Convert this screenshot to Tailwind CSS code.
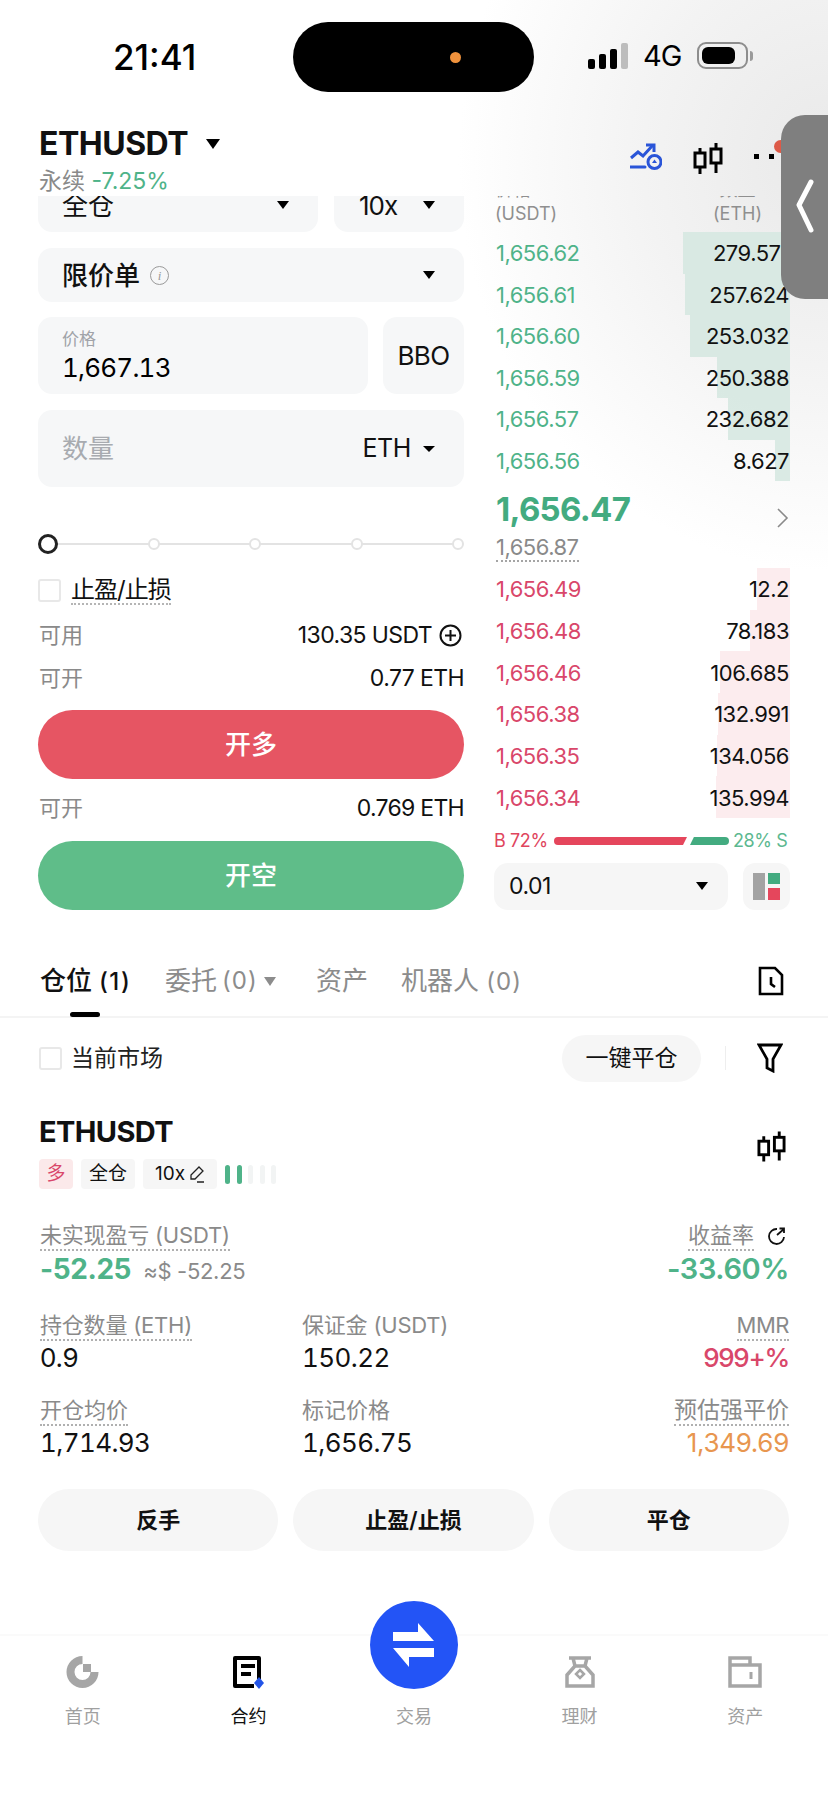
<!DOCTYPE html>
<html lang="zh-CN">
<head>
  <meta charset="UTF-8" />
  <meta name="viewport" content="width=device-width, initial-scale=1.0"/>
  <title>ETHUSDT</title>
  <script src="https://cdn.jsdelivr.net/npm/@tailwindcss/browser@4"></script>
</head>
<body class="bg-white">
<div class="relative w-[828px] h-[1795px] overflow-hidden bg-white text-[#111] [font-family:Inter,'Noto_Sans_CJK_SC',sans-serif]">
  <!-- grey wash behind the top right of the page -->
  <div class="absolute left-0 top-0 w-full h-[700px] bg-[radial-gradient(ellipse_370px_410px_at_100%_23%,#e9e9e9_0%,#f3f3f3_50%,#ffffff_100%)]"></div>

  <!-- status bar -->
  <div class="relative h-[98px] flex">
    <div class="w-[293px] pt-[37px] pl-[113px] text-[35px] leading-[40px] font-medium text-black">21:41</div>
    <div class="mt-[22px] w-[241px] h-[70px] rounded-[35px] bg-black flex items-center pl-[157px]">
      <div class="w-[11px] h-[11px] rounded-full bg-[#f0923c]"></div>
    </div>
    <div class="ml-[54px] mt-[43px] h-[26px] flex items-end">
      <div class="flex items-end gap-[4px]">
        <div class="w-[7px] h-[10px] rounded-[2px] bg-black"></div>
        <div class="w-[7px] h-[15px] rounded-[2px] bg-black"></div>
        <div class="w-[7px] h-[20px] rounded-[2px] bg-black"></div>
        <div class="w-[7px] h-[26px] rounded-[2px] bg-[#bdbdbd]"></div>
      </div>
      <div class="ml-[15px] text-[29px] leading-[26px] tracking-[-1px] text-black">4G</div>
      <div class="ml-[16px] w-[51px] h-[27px] rounded-[9px] border-2 border-[#8d8d8d] p-[3px]">
        <div class="w-[33px] h-full rounded-[6px] bg-black"></div>
      </div>
      <div class="ml-[2px] mb-[8px] w-[3px] h-[10px] rounded-r bg-[#9a9a9a]"></div>
    </div>
  </div>

  <!-- market header -->
  <div class="relative h-[98px] flex justify-between">
    <div class="pl-[39px] pt-[29px]">
      <div class="flex items-center h-[34px]">
        <span class="text-[32px] leading-[34px] font-bold tracking-[-0.5px]">ETHUSDT</span>
        <span class="ml-[18px] w-0 h-0 border-x-[7px] border-x-transparent border-t-[10px] border-t-black"></span>
      </div>
      <div class="mt-[8px] text-[23px] leading-[24px] text-[#8a8a8a]">永续 <span class="text-[#4fb389]">-7.25%</span></div>
    </div>
    <div class="flex pr-[54px] pt-[47px] gap-[31px] items-start">
      <svg width="32" height="28" viewBox="0 0 32 28" fill="none" stroke="#2a55d8" stroke-width="3" class="-mt-[2px]"><path d="M1 15l7-6 5 4 10-11"/><path d="M16 2h8v7"/><path d="M0 24h15" stroke-linecap="round"/><circle cx="24.500" cy="19" r="6.500"/><path d="M24.500 16.500l2.500 3.500h-5z" fill="#2a55d8" stroke="none"/></svg>
      <svg width="30" height="32" viewBox="0 0 30 32" fill="none" stroke="#000" stroke-width="3" class="-mt-[2px]"><rect x="2" y="10" width="10" height="14"/><path d="M7 5v5M7 24v7"/><rect x="18" y="6" width="10" height="14"/><path d="M23 0v6M23 20v10"/></svg>
      <div class="flex gap-[10px] mt-[9px]">
        <div class="w-[5px] h-[5px] bg-black"></div>
        <div class="w-[5px] h-[5px] bg-black"></div>
      </div>
    </div>
    <div class="absolute left-[774px] top-[42px] w-[13px] h-[13px] rounded-full bg-[#dd5a48]"></div>
  </div>

  <!-- order form and book -->
  <div class="relative h-[733px] overflow-hidden flex pl-[38px]">
    <div class="w-[426px] -mt-[18px]">
      <div class="flex gap-[16px]">
        <div class="w-[280px] h-[54px] rounded-[14px] bg-[#f6f7f8] flex items-center justify-between pl-[24px] pr-[29px]">
          <span class="text-[26px]">全仓</span>
          <span class="w-0 h-0 border-x-[6px] border-x-transparent border-t-[8px] border-t-black"></span>
        </div>
        <div class="w-[130px] h-[54px] rounded-[14px] bg-[#f6f7f8] flex items-center justify-between pl-[25px] pr-[29px]">
          <span class="text-[26px] tracking-[-1px]">10x</span>
          <span class="w-0 h-0 border-x-[6px] border-x-transparent border-t-[8px] border-t-black"></span>
        </div>
      </div>
      <div class="mt-[16px] h-[54px] rounded-[14px] bg-[#f6f7f8] flex items-center justify-between pl-[24px] pr-[29px]">
        <div class="flex items-center gap-[10px]">
          <span class="text-[26px] font-medium">限价单</span>
          <span class="w-[19px] h-[19px] rounded-full border border-[#9a9a9a] text-[#9a9a9a] text-[13px] leading-[17px] text-center italic font-['Liberation_Serif',serif]">i</span>
        </div>
        <span class="w-0 h-0 border-x-[6px] border-x-transparent border-t-[8px] border-t-black"></span>
      </div>
      <div class="mt-[15px] flex gap-[15px]">
        <div class="w-[330px] h-[77px] rounded-[14px] bg-[#f6f7f8] pl-[24px] pt-[11px]">
          <div class="text-[17px] leading-[22px] text-[#a0a3a8]">价格</div>
          <div class="mt-[2px] text-[26px] leading-[32px] tabular-nums tracking-[-0.8px] text-black">1,667.13</div>
        </div>
        <div class="w-[81px] h-[77px] rounded-[14px] bg-[#f6f7f8] flex items-center justify-center text-[26px] tracking-[-0.6px]">BBO</div>
      </div>
      <div class="mt-[16px] h-[77px] rounded-[14px] bg-[#f6f7f8] flex items-center justify-between pl-[24px] pr-[29px]">
        <span class="text-[26px] text-[#a8abb0]">数量</span>
        <div class="flex items-center gap-[12px]">
          <span class="text-[25px] tracking-[-0.4px]">ETH</span>
          <span class="w-0 h-0 border-x-[6px] border-x-transparent border-t-[6px] border-t-black"></span>
        </div>
      </div>
      <!-- leverage slider -->
      <div class="relative mt-[47px] h-[20px] flex items-center justify-between">
        <div class="absolute left-[10px] right-[6px] top-[9px] h-[2px] bg-[#e3e3e3]"></div>
        <div class="relative w-[20px] h-[20px] rounded-full border-[3px] border-[#222] bg-white"></div>
        <div class="relative w-[12px] h-[12px] rounded-full border-2 border-[#e3e3e3] bg-white"></div>
        <div class="relative w-[12px] h-[12px] rounded-full border-2 border-[#e3e3e3] bg-white"></div>
        <div class="relative w-[12px] h-[12px] rounded-full border-2 border-[#e3e3e3] bg-white"></div>
        <div class="relative w-[12px] h-[12px] rounded-full border-2 border-[#e3e3e3] bg-white"></div>
      </div>
      <div class="mt-[23px] flex items-center gap-[10px] h-[27px]">
        <div class="w-[23px] h-[23px] rounded-[3px] border-2 border-[#e8e8e8]"></div>
        <span class="text-[24px] leading-[27px] border-b-2 border-dotted border-[#b5b5b5] tracking-[-1px]">止盈/止损</span>
      </div>
      <div class="mt-[17px] h-[28px] flex items-center justify-between text-[22px]">
        <span class="text-[#8a8a8a] pl-[1px]">可用</span>
        <div class="flex items-center gap-[7px] pr-[2px]">
          <span class="text-[23px] tracking-[-0.6px]">130.35 USDT</span>
          <svg width="23" height="23" viewBox="0 0 23 23" fill="none" stroke="#111" stroke-width="2"><circle cx="11.500" cy="11.500" r="10"/><path d="M11.500 6v11M6 11.500h11"/></svg>
        </div>
      </div>
      <div class="mt-[15px] h-[28px] flex items-center justify-between text-[22px]">
        <span class="text-[#8a8a8a] pl-[1px]">可开</span>
        <span class="text-[23px] tracking-[-0.6px]">0.77 ETH</span>
      </div>
      <button class="mt-[18px] w-full h-[69px] rounded-full bg-[#e65563] text-white text-[26px] font-medium">开多</button>
      <div class="mt-[15px] h-[28px] flex items-center justify-between text-[22px]">
        <span class="text-[#8a8a8a] pl-[1px]">可开</span>
        <span class="text-[23px] tracking-[-0.7px]">0.769 ETH</span>
      </div>
      <button class="mt-[19px] w-full h-[69px] rounded-full bg-[#5fbd89] text-white text-[26px] font-medium">开空</button>
    </div>

    <div class="ml-[30px] w-[296px] -mt-[18px]">
      <div class="flex justify-between pl-[1px] pr-[28px] text-[18px] leading-[24px] text-[#8f8f8f]">
        <div>价格<br>(USDT)</div>
        <div class="text-center">数量<br>(ETH)</div>
      </div>
      <div class="mt-[6px] text-[22px] tracking-[-0.5px]">
        <div class="relative h-[41.500px] pt-[2px] flex items-center justify-between pl-[2px] pr-[1px]"><div class="absolute right-0 top-0 h-full w-[107px] bg-[#d6e8e1]/90"></div><span class="relative text-[#4fb389]">1,656.62</span><span class="relative">279.571</span></div>
        <div class="relative h-[41.500px] pt-[2px] flex items-center justify-between pl-[2px] pr-[1px]"><div class="absolute right-0 top-0 h-full w-[105px] bg-[#d6e8e1]/90"></div><span class="relative text-[#4fb389]">1,656.61</span><span class="relative">257.624</span></div>
        <div class="relative h-[41.500px] pt-[2px] flex items-center justify-between pl-[2px] pr-[1px]"><div class="absolute right-0 top-0 h-full w-[100px] bg-[#d6e8e1]/90"></div><span class="relative text-[#4fb389]">1,656.60</span><span class="relative">253.032</span></div>
        <div class="relative h-[41.500px] pt-[2px] flex items-center justify-between pl-[2px] pr-[1px]"><div class="absolute right-0 top-0 h-full w-[73px] bg-[#d6e8e1]/90"></div><span class="relative text-[#4fb389]">1,656.59</span><span class="relative">250.388</span></div>
        <div class="relative h-[41.500px] pt-[2px] flex items-center justify-between pl-[2px] pr-[1px]"><div class="absolute right-0 top-0 h-full w-[62px] bg-[#d6e8e1]/90"></div><span class="relative text-[#4fb389]">1,656.57</span><span class="relative">232.682</span></div>
        <div class="relative h-[41.500px] pt-[2px] flex items-center justify-between pl-[2px] pr-[1px]"><div class="absolute right-0 top-0 h-full w-[15px] bg-[#d6e8e1]/90"></div><span class="relative text-[#4fb389]">1,656.56</span><span class="relative">8.627</span></div>
      </div>
      <div class="relative h-[87px] pl-[2px] pt-[8px]">
        <div class="text-[33px] leading-[40px] font-bold tracking-[-0.7px] text-[#43ab80]">1,656.47</div>
        <div class="inline-block mt-[5px] text-[22px] leading-[26px] tracking-[-0.5px] text-[#8a8a8a] border-b-2 border-dotted border-[#a5a5a5]">1,656.87</div>
        <svg class="absolute right-[1px] top-[27px]" width="12" height="20" viewBox="0 0 12 20" fill="none" stroke="#8a8a8a" stroke-width="1.600"><path d="M1 1l9 9-9 9"/></svg>
      </div>
      <div class="text-[22px] tracking-[-0.5px]">
        <div class="relative h-[41.670px] pt-[2px] flex items-center justify-between pl-[2px] pr-[1px]"><div class="absolute right-0 top-0 h-full w-[33px] bg-[#fcecee]"></div><span class="relative text-[#d9476a]">1,656.49</span><span class="relative">12.2</span></div>
        <div class="relative h-[41.670px] pt-[2px] flex items-center justify-between pl-[2px] pr-[1px]"><div class="absolute right-0 top-0 h-full w-[40px] bg-[#fcecee]"></div><span class="relative text-[#d9476a]">1,656.48</span><span class="relative">78.183</span></div>
        <div class="relative h-[41.670px] pt-[2px] flex items-center justify-between pl-[2px] pr-[1px]"><div class="absolute right-0 top-0 h-full w-[70px] bg-[#fcecee]"></div><span class="relative text-[#d9476a]">1,656.46</span><span class="relative">106.685</span></div>
        <div class="relative h-[41.670px] pt-[2px] flex items-center justify-between pl-[2px] pr-[1px]"><div class="absolute right-0 top-0 h-full w-[72px] bg-[#fcecee]"></div><span class="relative text-[#d9476a]">1,656.38</span><span class="relative">132.991</span></div>
        <div class="relative h-[41.670px] pt-[2px] flex items-center justify-between pl-[2px] pr-[1px]"><div class="absolute right-0 top-0 h-full w-[73px] bg-[#fcecee]"></div><span class="relative text-[#d9476a]">1,656.35</span><span class="relative">134.056</span></div>
        <div class="relative h-[41.670px] pt-[2px] flex items-center justify-between pl-[2px] pr-[1px]"><div class="absolute right-0 top-0 h-full w-[74px] bg-[#fcecee]"></div><span class="relative text-[#d9476a]">1,656.34</span><span class="relative">135.994</span></div>
      </div>
      <div class="mt-[11px] h-[24px] flex items-center text-[18px] tracking-[-0.4px]">
        <span class="w-[60px] text-[#e0455d] whitespace-nowrap">B 72%</span>
        <div class="w-[133px] h-[8px] rounded-l-full bg-[#e5465c] [clip-path:polygon(0_0,100%_0,97%_100%,0_100%)]"></div>
        <div class="ml-[3px] w-[39px] h-[8px] rounded-r-full bg-[#43ab80] [clip-path:polygon(10%_0,100%_0,100%_100%,0_100%)]"></div>
        <span class="ml-[4px] text-[#5cb890] whitespace-nowrap">28% S</span>
      </div>
      <div class="mt-[10px] flex gap-[15px]">
        <div class="w-[234px] h-[47px] rounded-[14px] bg-[#f6f6f6] flex items-center justify-between pl-[15px] pr-[20px]">
          <span class="text-[23px] tracking-[-0.5px]">0.01</span>
          <span class="w-0 h-0 border-x-[6px] border-x-transparent border-t-[8px] border-t-black"></span>
        </div>
        <div class="w-[47px] h-[47px] rounded-[12px] bg-[#f6f6f6] flex items-center justify-center gap-[3px]">
          <div class="w-[12px] h-[27px] bg-[#a3a3a3]"></div>
          <div class="flex flex-col gap-[4px]">
            <div class="w-[12px] h-[11.500px] bg-[#43ab80]"></div>
            <div class="w-[12px] h-[11.500px] bg-[#e5465c]"></div>
          </div>
        </div>
      </div>
    </div>
  </div>

  <!-- position tabs -->
  <div class="relative h-[89px] border-b-2 border-[#f4f4f4] flex items-start pl-[40px] pr-[44px] pt-[34px] text-[26px] leading-[36px] text-[#8c8c8c]">
    <div class="relative w-[125px] text-[#111] font-medium whitespace-nowrap">仓位 <span class="text-[24px] tracking-[1.500px]">(1)</span>
      <div class="absolute left-[30px] top-[49px] w-[30px] h-[5px] rounded-full bg-black"></div>
    </div>
    <div class="w-[151px] flex items-center">委托 <span class="ml-[5px] text-[24px] tracking-[1px]">(0)</span><span class="ml-[6px] w-0 h-0 border-x-[6px] border-x-transparent border-t-[9px] border-t-[#8c8c8c]"></span></div>
    <div class="w-[85px]">资产</div>
    <div class="whitespace-nowrap">机器人 <span class="text-[24px] tracking-[1px]">(0)</span></div>
    <svg class="ml-auto mt-[3px]" width="26" height="30" viewBox="0 0 26 30" fill="none" stroke="#000" stroke-width="2.600"><path d="M2 2h15l7 7v19H2z"/><path d="M13 11v7l4 3"/></svg>
  </div>

  <!-- position filter -->
  <div class="h-[60px] mt-[10px] flex items-center pl-[39px] pr-[45px]">
    <div class="w-[23px] h-[23px] rounded-[3px] border-2 border-[#e8e8e8]"></div>
    <span class="ml-[9px] text-[23px] text-[#222]">当前市场</span>
    <div class="ml-auto w-[139px] h-[47px] rounded-full bg-[#f6f6f6] flex items-center justify-center text-[23px]">一键平仓</div>
    <div class="ml-[24px] w-[1px] h-[24px] bg-[#eeeeee]"></div>
    <svg class="ml-[31px]" width="26" height="30" viewBox="0 0 26 30" fill="none" stroke="#000" stroke-width="2.800"><path d="M2 2h22l-8 14v12l-6-3v-9z"/></svg>
  </div>

  <!-- position card -->
  <div class="px-[40px] pr-[39px]">
    <div class="flex justify-between mt-[12px] h-[98px]">
      <div>
        <div class="text-[29px] leading-[36px] font-bold tracking-[-0.6px] mt-[14px] -ml-[1px]">ETHUSDT</div>
        <div class="flex items-center gap-[8px] mt-[9px] -ml-[1px] text-[19px]">
          <div class="w-[34px] h-[30px] rounded-[4px] bg-[#fbe9ea] text-[#d9476a] flex items-center justify-center">多</div>
          <div class="w-[54px] h-[30px] rounded-[4px] bg-[#f6f6f6] flex items-center justify-center">全仓</div>
          <div class="w-[74px] h-[30px] rounded-[4px] bg-[#f6f6f6] flex items-center justify-center gap-[4px]">10x
            <svg width="16" height="17" viewBox="0 0 16 17" fill="none" stroke="#222" stroke-width="1.300"><path d="M10 1l4 4-8 8H2v-4zM8 16h7"/></svg>
          </div>
          <div class="flex gap-[6.500px]">
            <div class="w-[5px] h-[19px] rounded-full bg-[#4fb389]"></div>
            <div class="w-[5px] h-[19px] rounded-full bg-[#4fb389]"></div>
            <div class="w-[5px] h-[19px] rounded-full bg-[#f2f4f4]"></div>
            <div class="w-[5px] h-[19px] rounded-full bg-[#f2f4f4]"></div>
            <div class="w-[5px] h-[19px] rounded-full bg-[#f2f4f4]"></div>
          </div>
        </div>
      </div>
      <svg class="mt-[31px] mr-[3px]" width="29" height="32" viewBox="0 0 30 32" fill="none" stroke="#000" stroke-width="3"><rect x="2" y="10" width="10" height="14"/><path d="M7 5v5M7 24v7"/><rect x="18" y="6" width="10" height="14"/><path d="M23 0v6M23 20v10"/></svg>
    </div>

    <div class="mt-[24px] flex justify-between items-start">
      <div>
        <div class="inline-block text-[22px] leading-[27px] text-[#8a8a8a] border-b-2 border-dotted border-[#b0b0b0] tracking-[-0.2px]">未实现盈亏 (USDT)</div>
        <div class="flex items-baseline h-[36px]">
          <span class="text-[28px] leading-[36px] font-bold tracking-[-0.4px] text-[#4fb389]">-52.25</span>
          <span class="ml-[12px] text-[22px] text-[#8a8a8a] tracking-[-0.3px]">≈$ -52.25</span>
        </div>
      </div>
      <div class="text-right">
        <div class="flex justify-end items-start gap-[14px]">
          <span class="text-[22px] leading-[27px] text-[#8a8a8a] border-b-2 border-dotted border-[#b0b0b0]">收益率</span>
          <svg class="mt-[5px] mr-[3px]" width="18" height="18" viewBox="0 0 18 18" fill="none" stroke="#111" stroke-width="1.800"><path d="M16 10a7.500 7.500 0 1 1-7-8"/><path d="M9 8l7-6M11.500 1.500H16V6"/></svg>
        </div>
        <div class="h-[36px] text-[29px] leading-[36px] font-semibold tracking-[-0.4px] text-[#4fb389]">-33.60%</div>
      </div>
    </div>

    <div class="mt-[25px] grid grid-cols-[262px_1fr_auto]">
      <div>
        <div class="inline-block text-[22px] leading-[27px] text-[#8a8a8a] border-b-2 border-dotted border-[#b0b0b0] tracking-[-0.2px]">持仓数量 (ETH)</div>
        <div class="text-[26px] leading-[32px] tracking-[-0.3px] mt-[1px]">0.9</div>
      </div>
      <div>
        <div class="text-[22px] leading-[27px] text-[#8a8a8a] tracking-[-0.2px]">保证金 (USDT)</div>
        <div class="text-[26px] leading-[32px] tabular-nums tracking-[-0.6px] mt-[3px]">150.22</div>
      </div>
      <div class="text-right">
        <div class="inline-block text-[22px] leading-[27px] text-[#8a8a8a] border-b-2 border-dotted border-[#b0b0b0] tracking-[-0.5px]">MMR</div>
        <div class="text-[26px] leading-[32px] font-medium tracking-[-1.300px] mt-[1px] text-[#d9476a]">999+%</div>
      </div>
      <div class="mt-[23px]">
        <div class="inline-block text-[22px] leading-[27px] text-[#8a8a8a] border-b-2 border-dotted border-[#b0b0b0]">开仓均价</div>
        <div class="text-[26px] leading-[32px] tabular-nums tracking-[-0.6px] mt-[1px]">1,714.93</div>
      </div>
      <div class="mt-[23px]">
        <div class="text-[22px] leading-[27px] text-[#8a8a8a]">标记价格</div>
        <div class="text-[26px] leading-[32px] tabular-nums tracking-[-0.6px] mt-[3px]">1,656.75</div>
      </div>
      <div class="mt-[23px] text-right">
        <div class="inline-block text-[23px] leading-[27px] text-[#8a8a8a] border-b-2 border-dotted border-[#b0b0b0]">预估强平价</div>
        <div class="text-[26px] leading-[32px] tracking-[-0.3px] mt-[1px] text-[#e8964f]">1,349.69</div>
      </div>
    </div>

    <div class="mt-[30px] -ml-[2px] flex gap-[15px] text-[22px] font-semibold">
      <button class="flex-1 h-[62px] rounded-full bg-[#f6f6f6]">反手</button>
      <button class="flex-1 h-[62px] rounded-full bg-[#f6f6f6]">止盈/止损</button>
      <button class="flex-1 h-[62px] rounded-full bg-[#f6f6f6]">平仓</button>
    </div>
  </div>

  <!-- bottom tab bar -->
  <div class="absolute left-0 right-0 top-[1634px] h-[161px] border-t-2 border-[#fafafa] grid grid-cols-5 bg-white text-[18px] text-[#a0a0a0]">
    <div class="flex flex-col items-center pt-[19px]">
      <svg width="34" height="34" viewBox="0 0 34 34" fill="none"><path d="M16.500 5a12 12 0 1 0 12 12" stroke="#a6a6a6" stroke-width="8"/><rect x="17" y="9" width="8" height="8" fill="#a6a6a6"/></svg>
      <span class="mt-[16px] leading-[24px]">首页</span>
    </div>
    <div class="flex flex-col items-center pt-[19px]">
      <svg width="34" height="34" viewBox="0 0 34 34" fill="none"><path d="M28 24V3H4v28h19" stroke="#000" stroke-width="4" stroke-linejoin="round"/><path d="M10 11h14M10 19h10" stroke="#000" stroke-width="4"/><path d="M28 22l5 6-5 6-5-6z" fill="#2254e8"/></svg>
      <span class="mt-[16px] leading-[24px] text-[#111]">合约</span>
    </div>
    <div class="relative flex flex-col items-center pt-[69px]">
      <div class="absolute left-[39px] -top-[35px] w-[88px] h-[88px] rounded-full bg-[#2354f6] flex items-center justify-center">
        <svg width="44" height="46" viewBox="0 0 44 46"><path d="M26 1l16 18H1v-9h25z" fill="#fff"/><path d="M1 26h41v9H17v10z" fill="#fff"/></svg>
      </div>
      <span class="leading-[24px]">交易</span>
    </div>
    <div class="flex flex-col items-center pt-[19px]">
      <svg width="34" height="34" viewBox="0 0 34 34" fill="none" stroke="#a6a6a6" stroke-width="3.500"><path d="M6 3h22M10 3l2 8-8 9v11h26V20l-8-9 2-8M12 11h10"/><path d="M17 15l4 4-4 4-4-4z" stroke-width="2.500"/></svg>
      <span class="mt-[16px] leading-[24px]">理财</span>
    </div>
    <div class="flex flex-col items-center pt-[19px]">
      <svg width="34" height="34" viewBox="0 0 34 34" fill="none" stroke="#a6a6a6" stroke-width="3.500"><path d="M2 31V3h20v7h10v21zM2 10h20"/><path d="M23 17v7" stroke-width="3"/></svg>
      <span class="mt-[16px] leading-[24px]">资产</span>
    </div>
  </div>

  <!-- floating side handle -->
  <div class="absolute left-[781px] top-[115px] w-[47px] h-[184px] rounded-l-[24px] bg-[#7f7f7f] flex items-start pl-[14px] pt-[64px]">
    <svg width="20" height="54" viewBox="0 0 20 54" fill="none" stroke="#fff" stroke-width="5" stroke-linecap="round" stroke-linejoin="round"><path d="M16 3L4 26l12 25"/></svg>
  </div>
</div>
</body>
</html>
